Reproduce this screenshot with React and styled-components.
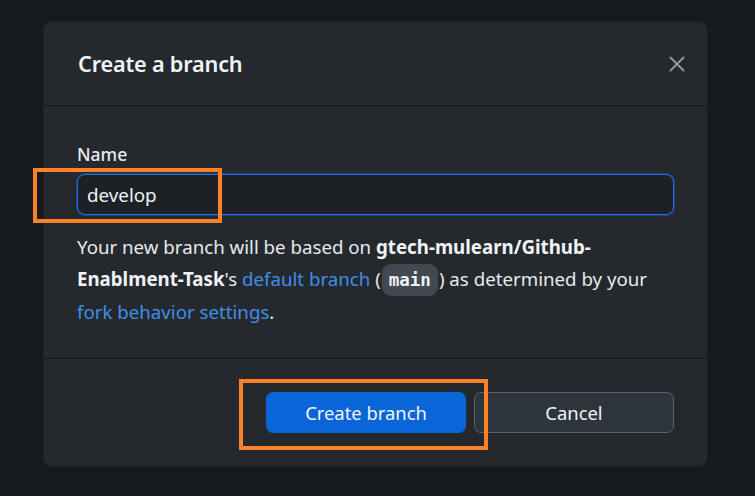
import React from "react";
import styled, { createGlobalStyle } from "styled-components";

const GlobalStyle = createGlobalStyle`
  html, body { margin: 0; padding: 0; background: #16191d; }
  body { font-family: "Noto Sans", "Liberation Sans", sans-serif; color: #e6edf3; }
  * { box-sizing: border-box; }
`;

const Page = styled.div`
  position: relative;
  width: 755px;
  height: 496px;
  padding: 22px 48px 0 44px;
  background: #16191d;
  overflow: hidden;
`;

const Dialog = styled.div`
  width: 663px;
  height: 444px;
  background: #25292e;
  border-radius: 8px;
  display: flex;
  flex-direction: column;
  box-shadow: 0 0 0 1px #1c2024;
`;

const Header = styled.div`
  height: 84px;
  padding: 0 20px 0 34px;
  display: flex;
  align-items: center;
  justify-content: space-between;
  border-bottom: 1px solid #15181b;
`;

const Title = styled.h2`
  margin: 0;
  font-size: 21.7px;
  font-weight: 600;
  color: #f0f3f6;
  letter-spacing: -0.2px;
`;

const CloseButton = styled.button`
  width: 20px;
  height: 20px;
  padding: 0;
  border: 0;
  background: transparent;
  display: flex;
  align-items: center;
  justify-content: center;
  color: #8d949c;
`;

const Body = styled.div`
  padding: 36px 33px 30px 33px;
  border-bottom: 1px solid #15181b;
`;

const Label = styled.label`
  display: block;
  font-size: 17.5px;
  line-height: 24px;
  font-weight: 500;
  color: #e8ecf0;
  margin-bottom: 8px;
`;

const Input = styled.div`
  height: 41px;
  border: 1.5px solid #1f6feb;
  border-radius: 8px;
  background: #1d2126;
  box-shadow: 0 0 0 1px rgba(31, 111, 235, 0.35);
  display: flex;
  align-items: center;
  padding: 0 9px;
  font-size: 18.8px;
  color: #eef1f4;
`;

const Note = styled.p`
  margin: 16px 0 0;
  font-size: 18.7px;
  line-height: 31.5px;
  color: #e6eaee;
`;

const Strong = styled.strong`
  font-weight: 700;
  color: #f0f3f6;
`;

const Link = styled.a`
  color: #3f8fea;
  text-decoration: none;
`;

const Code = styled.code`
  font-family: "DejaVu Sans Mono", "Liberation Mono", monospace;
  font-size: 17.5px;
  font-weight: 600;
  background: #424951;
  color: #eef1f4;
  border-radius: 9px;
  padding: 6px 7px;
  margin: 0 1px;
`;

const Footer = styled.div`
  flex: 1;
  padding: 0 33px;
  display: flex;
  align-items: center;
  justify-content: flex-end;
  gap: 8px;
`;

const Button = styled.button`
  width: 200px;
  height: 41px;
  border-radius: 7px;
  font-family: inherit;
  font-size: 18.4px;
  font-weight: 400;
  color: #f2f5f8;
  background: ${(p) => (p.$primary ? "#0a66d8" : "#2e343b")};
  border: 1px solid ${(p) => (p.$primary ? "#0a66d8" : "#5c636b")};
`;

const Annotation = styled.div`
  position: absolute;
  border: 4px solid #ff8126;
  left: ${(p) => p.$x}px;
  top: ${(p) => p.$y}px;
  width: ${(p) => p.$w}px;
  height: ${(p) => p.$h}px;
  pointer-events: none;
`;

export default function App() {
  return (
    <>
      <GlobalStyle />
      <Page>
        <Dialog>
          <Header>
            <Title>Create a branch</Title>
            <CloseButton aria-label="Close">
              <svg width="18" height="18" viewBox="0 0 18 18" fill="none">
                <path d="M2.5 2.5 L15.5 15.5 M15.5 2.5 L2.5 15.5" stroke="currentColor" strokeWidth="2" strokeLinecap="round" />
              </svg>
            </CloseButton>
          </Header>
          <Body>
            <Label>Name</Label>
            <Input>develop</Input>
            <Note>
              Your new branch will be based on <Strong>gtech-mulearn/Github-Enablment-Task</Strong>'s{" "}
              <Link href="#">default branch</Link> (<Code>main</Code>) as determined by your{" "}
              <Link href="#">fork behavior settings</Link>.
            </Note>
          </Body>
          <Footer>
            <Button $primary>Create branch</Button>
            <Button>Cancel</Button>
          </Footer>
        </Dialog>
        <Annotation $x={33} $y={168} $w={189} $h={55} />
        <Annotation $x={239} $y={379} $w={249} $h={71} />
      </Page>
    </>
  );
}
